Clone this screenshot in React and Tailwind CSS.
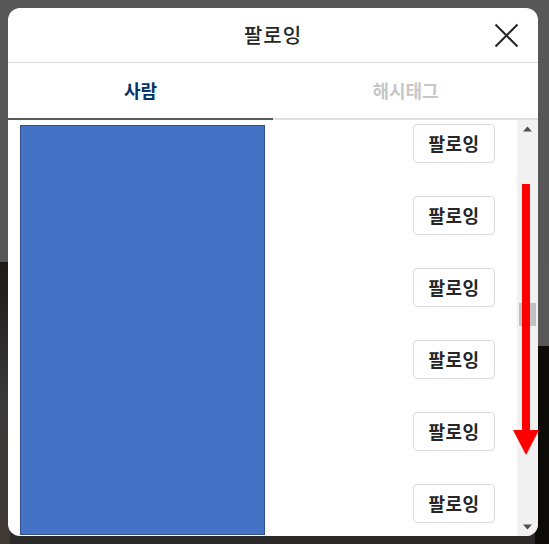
import React from 'react';

const FONT = { fontFamily: '"Noto Sans CJK KR", "Noto Sans", sans-serif' };

const FollowButton = () => (
  <button className="h-[39px] w-[82px] shrink-0 rounded-[4px] border border-[#dbdbdb] bg-white text-[18px] font-bold tracking-[0.5px] text-[#262626]">
    팔로잉
  </button>
);

const Scrollbar = () => (
  <div className="flex w-[21px] flex-col items-center bg-[#f1f1f1] pb-[6px] pt-[6px]">
    <svg width="9" height="6" viewBox="0 0 9 6">
      <path d="M0 5.5 L4.5 0.5 L9 5.5 Z" fill="#505050" />
    </svg>
    <div className="mt-[171px] h-[23px] w-[17px] bg-[#c1c1c1]" />
    <div className="flex-1" />
    <svg width="9" height="6" viewBox="0 0 9 6">
      <path d="M0 0.5 L4.5 5.5 L9 0.5 Z" fill="#505050" />
    </svg>
  </div>
);

export default function App() {
  const rows = Array.from({ length: 6 });

  return (
    <div className="relative flex h-[544px] w-[549px] flex-col overflow-hidden bg-[#565656]" style={FONT}>
      {/* page behind the overlay */}
      <div className="h-[262px] bg-[#575757]" />
      <div className="flex flex-1">
        <div className="w-[10px] bg-gradient-to-b from-[#1d1a18] via-[#3b3a3c] to-[#403833]" />
        <div className="flex-1 bg-[#2c2a28]" />
        <div className="flex w-[14px] flex-col">
          <div className="h-[84px] bg-[#585858]" />
          <div className="flex-1 bg-[#0d0b08]" />
        </div>
      </div>

      {/* following modal */}
      <div className="absolute left-[8px] top-[8px] flex h-[528px] w-[530px] flex-col overflow-hidden rounded-[12px] bg-white">
        <div className="relative flex h-[55px] items-center justify-center border-b border-[#dbdbdb]">
          <span className="text-[20px] font-medium tracking-[1px] text-[#262626]">팔로잉</span>
          <svg className="absolute right-[19px] top-[15px]" width="25" height="25" viewBox="0 0 25 25">
            <path d="M1.5 1.5 L23.5 23.5 M23.5 1.5 L1.5 23.5" stroke="#262626" strokeWidth="2" />
          </svg>
        </div>

        <div className="flex h-[57px]">
          <div className="flex flex-1 items-center justify-center border-b-2 border-[#595959] text-[18px] font-bold text-[#003569]">
            사람
          </div>
          <div className="flex flex-1 items-center justify-center border-b-2 border-[#e0e0e0] text-[18px] font-bold text-[#c7c7c7]">
            해시태그
          </div>
        </div>

        <div className="flex flex-1">
          <div className="flex flex-1 flex-col items-end gap-[33px] pr-[22px] pt-[4px]">
            {rows.map((_, i) => (
              <FollowButton key={i} />
            ))}
          </div>
          <Scrollbar />
        </div>
      </div>

      {/* redaction block over the user list */}
      <div className="absolute left-[20px] top-[125px] h-[410px] w-[245px] border border-[#2f528f] bg-[#4472c4]" />

      {/* scroll direction arrow */}
      <svg className="absolute left-[512px] top-[184px]" width="28" height="272" viewBox="0 0 28 272">
        <rect x="10" y="0" width="8" height="248" fill="#ff0000" />
        <path d="M1 246 L27 246 L14 271 Z" fill="#ff0000" />
      </svg>
    </div>
  );
}
